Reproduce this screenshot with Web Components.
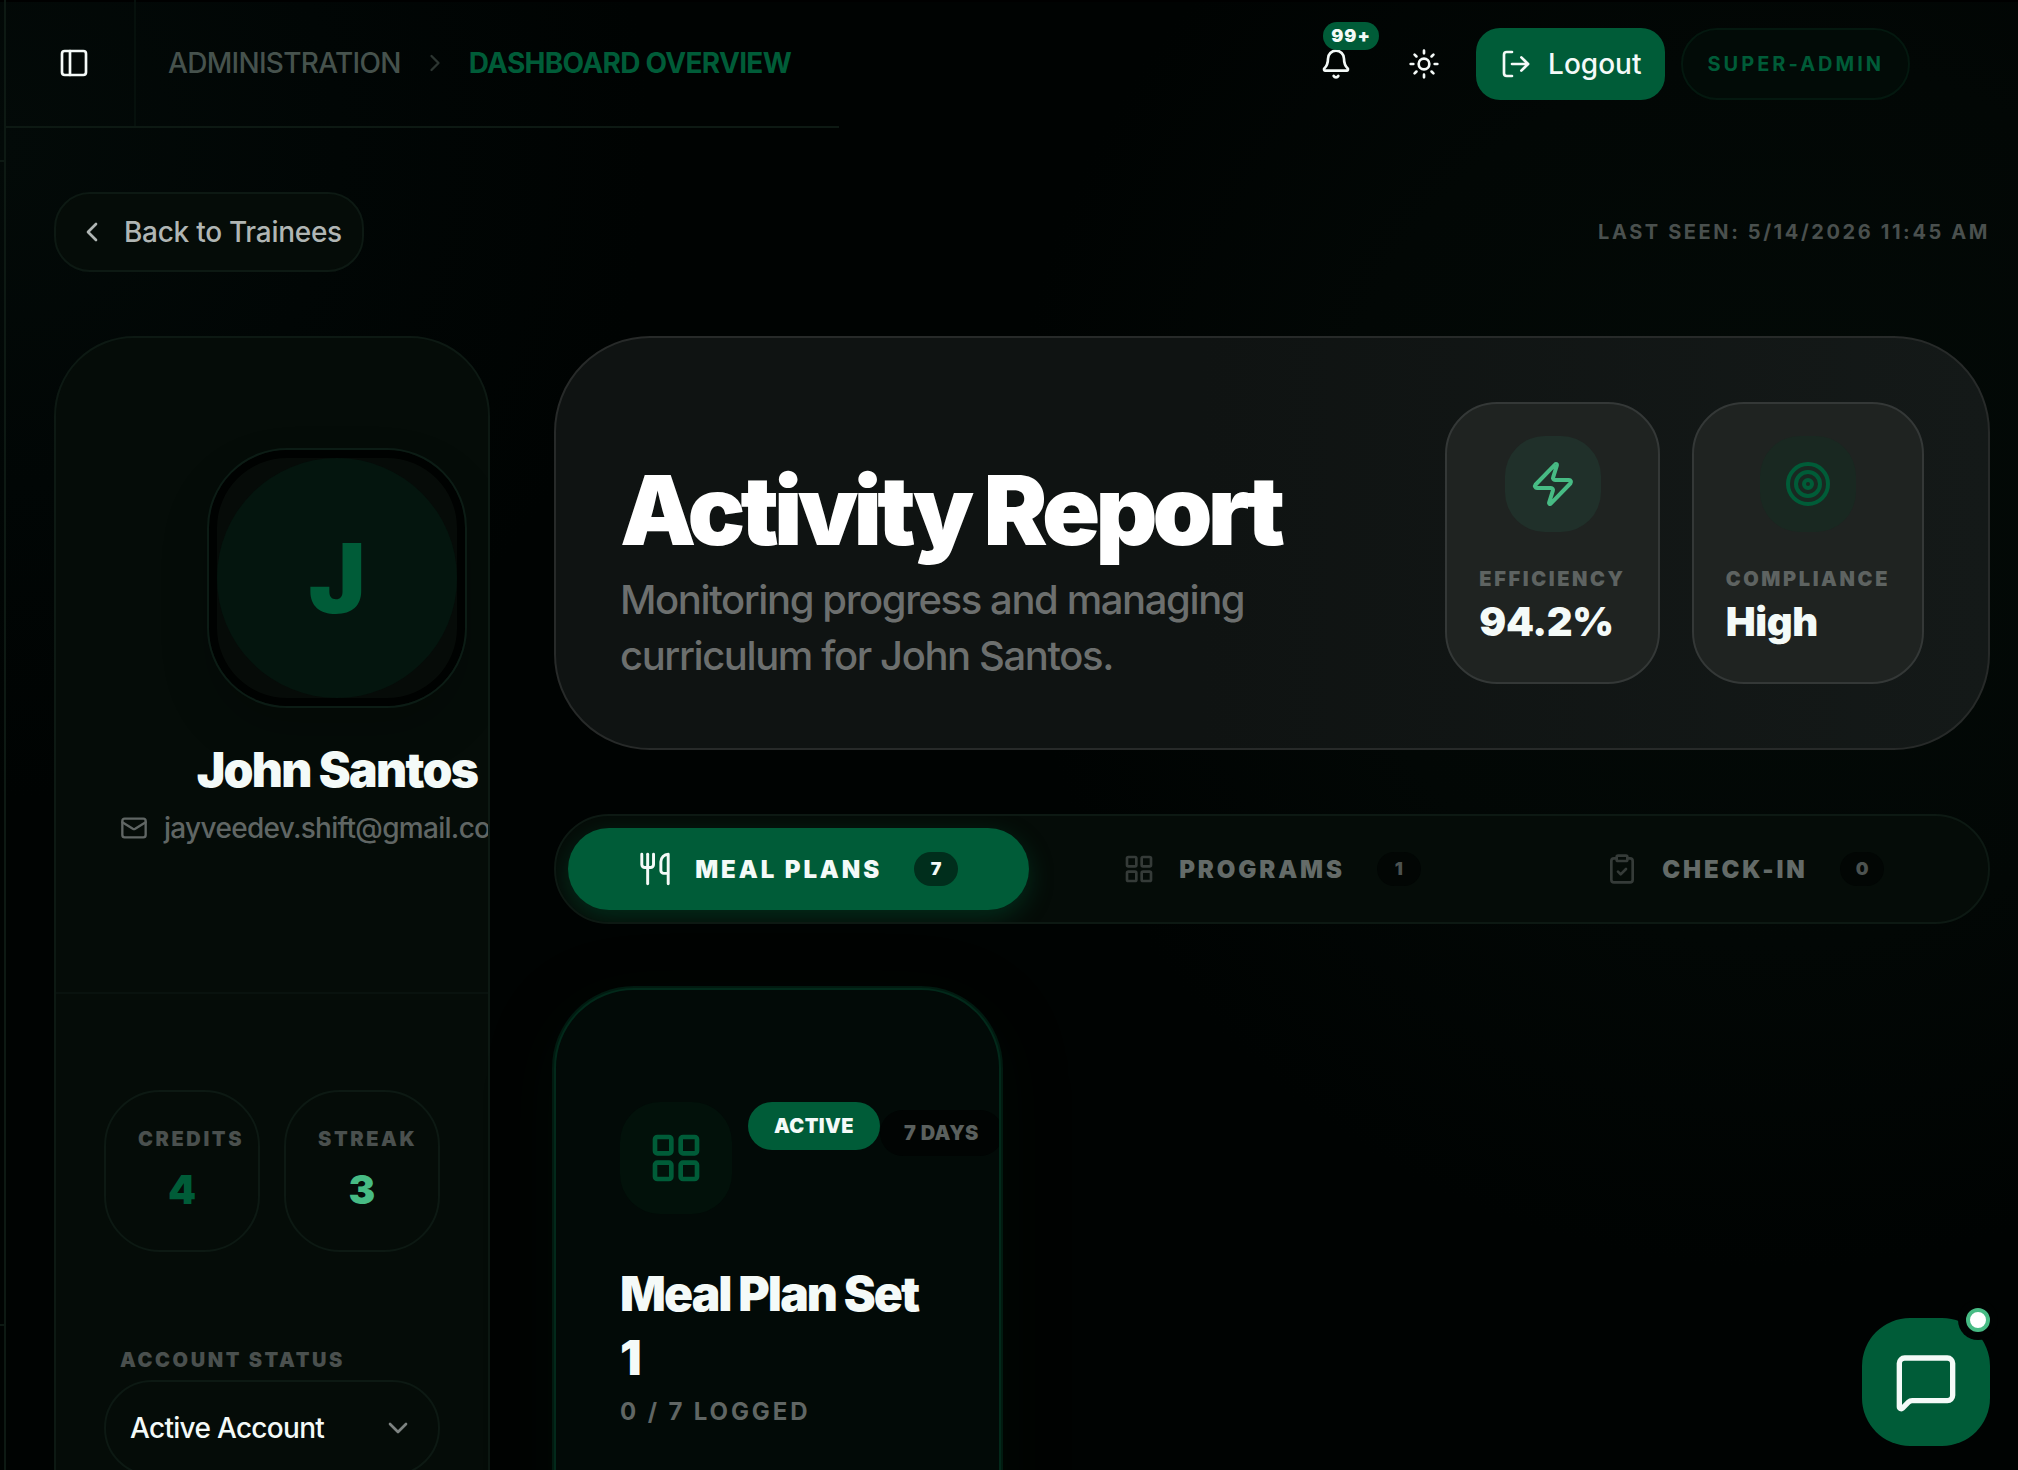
<!doctype html>
<html lang="en">
<head>
<meta charset="utf-8">
<meta name="viewport" content="width=device-width, initial-scale=1">
<title>Activity Report</title>
<style>
  :root {
    --bg: #000302;
    --surface: #050c08;
    --line: #0d1913;
    --primary: #005c38;
    --accent: #47bb84;
    --text: #f4faf8;
    --muted: #606664;
    --dim: #4a504e;
  }
  body {
    background: var(--bg);
    color: var(--text);
    font-family: Inter, "Liberation Sans", sans-serif;
    font-size: 28px;
    margin: 0;
  }
</style>
</head>
<body>
<app-shell>
  <app-header slot="header">
    <a slot="crumb" href="#">ADMINISTRATION</a>
    <a slot="current" href="#" aria-current="page">DASHBOARD OVERVIEW</a>
  </app-header>
  <page-bar slot="bar" seen="LAST SEEN: 5/14/2026 11:45 AM">Back to Trainees</page-bar>
  <profile-card slot="aside" initial="J" name="John Santos" email="jayveedev.shift@gmail.com">
    <stat-tile label="CREDITS" value="4"></stat-tile>
    <stat-tile label="STREAK" value="3" tone="accent"></stat-tile>
  </profile-card>
  <report-hero>
    <span slot="title">Activity Report</span>
    <span slot="text">Monitoring progress and managing curriculum for John Santos.</span>
    <metric-card icon="zap" tone="accent" label="EFFICIENCY" value="94.2%"></metric-card>
    <metric-card icon="target" label="COMPLIANCE" value="High"></metric-card>
  </report-hero>
  <tab-bar>
    <tab-item icon="utensils" count="7" active>MEAL PLANS</tab-item>
    <tab-item icon="grid" count="1">PROGRAMS</tab-item>
    <tab-item icon="clipboard" count="0">CHECK-IN</tab-item>
  </tab-bar>
  <plan-grid>
    <plan-card status="ACTIVE" days="7 DAYS" logged="0 / 7 LOGGED">Meal Plan Set 1</plan-card>
  </plan-grid>
  <chat-button slot="chat"></chat-button>
</app-shell>

<script>
const ICONS = {
  panel: `<rect width="18" height="18" x="3" y="3" rx="2"/><path d="M9 3v18"/>`,
  right: `<path d="m9 18 6-6-6-6"/>`,
  left: `<path d="m15 18-6-6 6-6"/>`,
  down: `<path d="m6 9 6 6 6-6"/>`,
  bell: `<path d="M10.268 21a2 2 0 0 0 3.464 0"/><path d="M3.262 15.326A1 1 0 0 0 4 17h16a1 1 0 0 0 .74-1.673C19.41 13.956 18 12.499 18 8A6 6 0 0 0 6 8c0 4.499-1.411 5.956-2.738 7.326"/>`,
  sun: `<circle cx="12" cy="12" r="4"/><path d="M12 2v2M12 20v2M4.93 4.93l1.41 1.41M17.66 17.66l1.41 1.41M2 12h2M20 12h2M6.34 17.66l-1.41 1.41M19.07 4.93l-1.41 1.41"/>`,
  logout: `<path d="m16 17 5-5-5-5"/><path d="M21 12H9"/><path d="M9 21H5a2 2 0 0 1-2-2V5a2 2 0 0 1 2-2h4"/>`,
  mail: `<path d="m22 7-8.991 5.727a2 2 0 0 1-2.009 0L2 7"/><rect x="2" y="4" width="20" height="16" rx="2"/>`,
  zap: `<path d="M4 14a1 1 0 0 1-.78-1.63l9.9-10.2a.5.5 0 0 1 .86.46l-1.92 6.02A1 1 0 0 0 13 10h7a1 1 0 0 1 .78 1.63l-9.9 10.2a.5.5 0 0 1-.86-.46l1.92-6.02A1 1 0 0 0 11 14z"/>`,
  target: `<circle cx="12" cy="12" r="10"/><circle cx="12" cy="12" r="6"/><circle cx="12" cy="12" r="2"/>`,
  utensils: `<path d="M3 2v7c0 1.1.9 2 2 2h4a2 2 0 0 0 2-2V2"/><path d="M7 2v20"/><path d="M21 15V2a5 5 0 0 0-5 5v6c0 1.1.9 2 2 2h3Zm0 0v7"/>`,
  grid: `<rect width="7" height="7" x="3" y="3" rx="1"/><rect width="7" height="7" x="14" y="3" rx="1"/><rect width="7" height="7" x="14" y="14" rx="1"/><rect width="7" height="7" x="3" y="14" rx="1"/>`,
  clipboard: `<rect width="8" height="4" x="8" y="2" rx="1"/><path d="M16 4h2a2 2 0 0 1 2 2v14a2 2 0 0 1-2 2H6a2 2 0 0 1-2-2V6a2 2 0 0 1 2-2h2"/><path d="m9 14 2 2 4-4"/>`,
  message: `<path d="M22 17a2 2 0 0 1-2 2H6.828a2 2 0 0 0-1.414.586l-2.202 2.202A.71.71 0 0 1 2 21.286V5a2 2 0 0 1 2-2h16a2 2 0 0 1 2 2z"/>`,
};

/**
 * Base class: attaches an open shadow root and fills it from render()
 */
class BaseElement extends HTMLElement {
  constructor() {
    super();
    this.attachShadow({ mode: "open" });
  }

  connectedCallback() {
    this.shadowRoot.innerHTML = `
      <style>
        *, *::before, *::after { box-sizing: border-box; }
        :host { box-sizing: border-box; display: block; }
        button, select { background: none; border: 0; color: inherit; font: inherit; margin: 0; padding: 0; }
        h1, h2, p { margin: 0; }
      </style>
      ${this.render()}
    `;
  }

  /**
   * @param {string} name - attribute to read
   * @returns {string}
   */
  attr(name) {
    return this.getAttribute(name) || "";
  }
}

customElements.define(
  "ui-icon",
  class extends BaseElement {
    render() {
      const size = this.attr("size") || "32";
      return `
        <style>
          :host { display: inline-flex; flex: none; }
          svg { display: block; fill: none; stroke: currentColor; stroke-linecap: round; stroke-linejoin: round; stroke-width: 2; }
        </style>
        <svg width="${size}" height="${size}" viewBox="0 0 24 24" aria-hidden="true">${ICONS[this.attr("name")]}</svg>
      `;
    }
  },
);

customElements.define(
  "app-shell",
  class extends BaseElement {
    render() {
      return `
        <style>
          :host {
            background:
              linear-gradient(#000000 2px, transparent 2px),
              radial-gradient(circle at 88% 34%, #030a07 0, #020705 22%, transparent 38%),
              radial-gradient(circle at 0 10%, #030a08 0, #010605 14%, transparent 27%),
              var(--bg);
            display: grid;
            grid-template-columns: 6px minmax(0, 1fr);
            height: 100vh;
            overflow: hidden;
          }
          .rail {
            border-right: 2px solid var(--line);
            display: flex;
            flex-direction: column;
            justify-content: space-between;
            padding: 160px 0 144px;
          }
          .rail hr { border: 0; border-top: 2px solid var(--line); margin: 0; width: 100%; }
          .content { min-width: 0; overflow: hidden; }
          main { display: flex; flex-direction: column; gap: 64px; padding: 64px 28px 64px 48px; }
          .columns { align-items: start; display: grid; gap: 64px; grid-template-columns: 436px minmax(0, 1fr); }
          .stack { display: flex; flex-direction: column; gap: 64px; min-width: 0; }
        </style>
        <div class="rail"><hr><hr></div>
        <div class="content">
          <slot name="header"></slot>
          <main>
            <slot name="bar"></slot>
            <div class="columns">
              <slot name="aside"></slot>
              <div class="stack"><slot></slot></div>
            </div>
          </main>
        </div>
        <slot name="chat"></slot>
      `;
    }
  },
);

customElements.define(
  "app-header",
  class extends BaseElement {
    render() {
      return `
        <style>
          :host { align-items: stretch; display: flex; height: 128px; justify-content: space-between; padding-right: 108px; }
          ::slotted(a) { color: inherit; text-decoration: none; }
          nav { align-items: center; border-bottom: 2px solid var(--line); display: flex; font-weight: 500; padding-right: 48px; }
          .toggle { align-items: center; align-self: stretch; border-right: 2px solid #06100c; display: flex; justify-content: center; margin-right: 32px; padding-left: 8px; width: 130px; }
          .crumbs { align-items: center; color: #46524d; display: flex; gap: 20px; letter-spacing: -0.025em; }
          .crumbs .now { color: var(--primary); font-weight: 700; }
          .sep { color: #2c3531; }
          .actions { align-items: center; display: flex; gap: 16px; }
          .round { display: grid; height: 72px; place-items: center; position: relative; width: 72px; }
          .badge {
            background: var(--primary);
            border-radius: 14px;
            font-size: 18px;
            font-weight: 900;
            left: 23px;
            letter-spacing: 0.05em;
            line-height: 28px;
            position: absolute;
            text-align: center;
            top: -6px;
            width: 56px;
          }
          .logout { align-items: center; background: var(--primary); border-radius: 24px; display: flex; font-weight: 500; gap: 16px; height: 72px; padding: 0 24px; }
          .role {
            background: #020b07;
            border: 2px solid #04180f;
            border-radius: 36px;
            color: var(--primary);
            font-size: 20px;
            font-weight: 700;
            height: 72px;
            letter-spacing: 0.15em;
            line-height: 68px;
            padding: 0 24px;
          }
        </style>
        <nav aria-label="Breadcrumb">
          <button class="toggle" aria-label="Toggle sidebar"><ui-icon name="panel"></ui-icon></button>
          <div class="crumbs">
            <slot name="crumb"></slot>
            <ui-icon class="sep" name="right" size="28"></ui-icon>
            <span class="now"><slot name="current"></slot></span>
          </div>
        </nav>
        <div class="actions">
          <button class="round" aria-label="Notifications"><ui-icon name="bell"></ui-icon><span class="badge">99+</span></button>
          <button class="round" aria-label="Theme"><ui-icon name="sun"></ui-icon></button>
          <button class="logout"><ui-icon name="logout"></ui-icon>Logout</button>
          <span class="role">SUPER-ADMIN</span>
        </div>
      `;
    }
  },
);

customElements.define(
  "page-bar",
  class extends BaseElement {
    render() {
      return `
        <style>
          :host { align-items: center; display: flex; justify-content: space-between; }
          button {
            align-items: center;
            background: var(--surface);
            border: 2px solid var(--line);
            border-radius: 36px;
            color: #b0b6b4;
            display: flex;
            font-weight: 500;
            gap: 16px;
            height: 80px;
            letter-spacing: -0.01em;
            padding: 0 20px;
          }
          p { color: var(--dim); font-size: 20px; font-weight: 700; letter-spacing: 0.13em; }
        </style>
        <button><ui-icon name="left"></ui-icon><slot></slot></button>
        <p>${this.attr("seen")}</p>
      `;
    }
  },
);

customElements.define(
  "stat-tile",
  class extends BaseElement {
    render() {
      return `
        <style>
          :host { border: 2px solid var(--line); border-radius: 56px; min-width: 0; padding: 32px; text-align: center; }
          .label { color: var(--dim); font-size: 20px; font-weight: 900; letter-spacing: 0.13em; line-height: 30px; }
          .value { color: var(--primary); font-size: 40px; font-weight: 900; line-height: 56px; margin-top: 8px; }
          :host([tone="accent"]) .value { color: var(--accent); }
        </style>
        <p class="label">${this.attr("label")}</p>
        <p class="value">${this.attr("value")}</p>
      `;
    }
  },
);

customElements.define(
  "profile-card",
  class extends BaseElement {
    render() {
      return `
        <style>
          :host { background: var(--surface); border: 2px solid var(--line); border-radius: 80px; overflow: hidden; }
          .head { border-bottom: 2px solid #09120e; display: flex; padding: 110px 64px 144px; }
          .who { align-items: center; display: flex; flex: none; flex-direction: column; min-width: 434px; }
          .avatar {
            background: #060b08;
            border: 2px solid #0c1c15;
            border-radius: 80px;
            box-shadow: inset 0 0 0 8px #000201, 0 24px 48px #0003;
            padding: 8px;
          }
          .avatar span {
            background: #04150e;
            border-radius: 50%;
            color: var(--primary);
            display: grid;
            font-size: 96px;
            font-weight: 900;
            height: 240px;
            place-items: center;
            width: 240px;
          }
          h2 { font-size: 48px; font-weight: 900; letter-spacing: -0.035em; line-height: 64px; margin-top: 30px; }
          .mail { align-items: center; align-self: flex-start; color: var(--muted); display: flex; font-weight: 500; gap: 16px; letter-spacing: -0.025em; line-height: 40px; margin-top: 6px; white-space: nowrap; }
          .body { display: grid; gap: 96px; padding: 96px 48px; }
          .stats { display: grid; gap: 24px; grid-template-columns: repeat(2, minmax(0, 1fr)); }
          label { color: var(--dim); display: block; font-size: 20px; font-weight: 900; letter-spacing: 0.13em; line-height: 24px; margin: 0 0 8px 16px; }
          .field { align-items: center; display: grid; }
          .field > * { grid-area: 1 / 1; }
          select { appearance: none; border: 2px solid var(--line); border-radius: 48px; font-weight: 500; height: 96px; letter-spacing: -0.025em; padding: 0 24px; width: 100%; }
          .field ui-icon { color: #7d8381; justify-self: end; margin-right: 26px; pointer-events: none; }
        </style>
        <div class="head">
          <div class="who">
            <div class="avatar"><span>${this.attr("initial")}</span></div>
            <h2>${this.attr("name")}</h2>
            <div class="mail"><ui-icon name="mail" size="28"></ui-icon>${this.attr("email")}</div>
          </div>
        </div>
        <div class="body">
          <div class="stats"><slot></slot></div>
          <div>
            <label for="status">ACCOUNT STATUS</label>
            <div class="field">
              <select id="status"><option>Active Account</option></select>
              <ui-icon name="down"></ui-icon>
            </div>
          </div>
        </div>
      `;
    }
  },
);

customElements.define(
  "report-hero",
  class extends BaseElement {
    render() {
      return `
        <style>
          :host {
            align-items: flex-end;
            background: linear-gradient(90deg, #0f1312, #0f1312 45%, #141918);
            border: 2px solid #272a29;
            border-radius: 96px;
            display: flex;
            gap: 64px;
            padding: 64px;
          }
          .copy { flex: 1; min-width: 0; }
          h1 { color: #ffffff; font-size: 96px; font-weight: 900; letter-spacing: -0.05em; line-height: 96px; margin-bottom: 14px; }
          p { color: #6c6f6e; font-size: 40px; font-weight: 500; letter-spacing: -0.035em; line-height: 56px; }
          .metrics { display: flex; gap: 32px; }
        </style>
        <div class="copy">
          <h1><slot name="title"></slot></h1>
          <p><slot name="text"></slot></p>
        </div>
        <div class="metrics"><slot></slot></div>
      `;
    }
  },
);

customElements.define(
  "metric-card",
  class extends BaseElement {
    render() {
      return `
        <style>
          :host {
            background: #1f2321;
            border: 2px solid #343837;
            border-radius: 52px;
            display: flex;
            flex-direction: column;
            padding: 32px;
          }
          .icon { align-self: center; background: #192821; border-radius: 40px; color: var(--primary); display: grid; height: 96px; margin-bottom: 32px; place-items: center; width: 96px; }
          :host([tone="accent"]) .icon { background: #20302a; color: var(--accent); }
          .label { color: #5e6361; font-size: 20px; font-weight: 900; letter-spacing: 0.13em; line-height: 30px; }
          .value { font-size: 40px; font-weight: 900; letter-spacing: -0.01em; line-height: 56px; }
        </style>
        <div class="icon"><ui-icon name="${this.attr("icon")}" size="48"></ui-icon></div>
        <p class="label">${this.attr("label")}</p>
        <p class="value">${this.attr("value")}</p>
      `;
    }
  },
);

customElements.define(
  "tab-bar",
  class extends BaseElement {
    render() {
      return `
        <style>
          :host {
            background: var(--surface);
            border: 2px solid var(--line);
            border-radius: 56px;
            display: grid;
            gap: 12px;
            grid-template-columns: repeat(3, minmax(0, 1fr));
            overflow: hidden;
            padding: 12px;
          }
        </style>
        <slot></slot>
      `;
    }
  },
);

customElements.define(
  "tab-item",
  class extends BaseElement {
    render() {
      return `
        <style>
          button {
            align-items: center;
            border-radius: 41px;
            color: #646b68;
            display: flex;
            font-size: 24px;
            font-weight: 900;
            gap: 24px;
            height: 82px;
            justify-content: center;
            letter-spacing: 0.12em;
            width: 100%;
          }
          ui-icon { color: #353b38; }
          .count { background: #020604; border-radius: 17px; color: #4c5250; font-size: 18px; letter-spacing: 0; line-height: 34px; margin-left: 8px; min-width: 44px; padding: 0 16px; }
          :host([active]) button { background: var(--primary); box-shadow: 0 8px 24px #005c3866; color: var(--text); }
          :host([active]) ui-icon { color: inherit; transform: scale(1.1); }
          :host([active]) .count { background: #002e1c; color: inherit; }
        </style>
        <button><ui-icon name="${this.attr("icon")}"></ui-icon><slot></slot><span class="count">${this.attr("count")}</span></button>
      `;
    }
  },
);

customElements.define(
  "plan-grid",
  class extends BaseElement {
    render() {
      return `
        <style>
          :host { display: grid; gap: 48px; grid-template-columns: repeat(3, minmax(0, 1fr)); }
        </style>
        <slot></slot>
      `;
    }
  },
);

customElements.define(
  "plan-card",
  class extends BaseElement {
    render() {
      return `
        <style>
          :host {
            background: #020a07;
            border: 2px solid #02291a;
            border-radius: 80px;
            box-shadow: 0 0 0 2px #011a10, 0 16px 64px #00120a66;
            min-height: 640px;
            overflow: hidden;
            padding: 112px 64px;
          }
          .top { align-items: flex-start; display: flex; margin-bottom: 48px; }
          .icon { background: #02110a; border-radius: 40px; color: var(--primary); display: grid; flex: none; height: 112px; margin-right: 16px; place-items: center; width: 112px; }
          .pill { border-radius: 24px; flex: none; font-size: 20px; font-weight: 900; letter-spacing: 0.02em; padding: 0 26px; white-space: nowrap; }
          .status { background: var(--primary); line-height: 48px; }
          .days { background: #010403; color: #5a605e; line-height: 46px; margin-top: 8px; padding: 0 24px; }
          h2 { font-size: 48px; font-weight: 900; letter-spacing: -0.04em; line-height: 64px; }
          .logged { color: var(--muted); font-size: 24px; font-weight: 700; letter-spacing: 0.12em; line-height: 44px; }
        </style>
        <div class="top">
          <div class="icon"><ui-icon name="grid" size="56"></ui-icon></div>
          <span class="pill status">${this.attr("status")}</span>
          <span class="pill days">${this.attr("days")}</span>
        </div>
        <h2><slot></slot></h2>
        <p class="logged">${this.attr("logged")}</p>
      `;
    }
  },
);

customElements.define(
  "chat-button",
  class extends BaseElement {
    render() {
      return `
        <style>
          :host { bottom: 24px; position: fixed; right: 28px; }
          button { background: var(--primary); border-radius: 48px; display: grid; height: 128px; place-items: center; width: 128px; }
          .dot {
            background: #ffffff;
            border: 4px solid var(--accent);
            border-radius: 50%;
            box-shadow: 0 0 0 8px var(--bg);
            height: 24px;
            position: absolute;
            right: 0;
            top: -10px;
            width: 24px;
          }
        </style>
        <button aria-label="Open chat"><ui-icon name="message" size="64"></ui-icon><span class="dot"></span></button>
      `;
    }
  },
);
</script>
</body>
</html>
